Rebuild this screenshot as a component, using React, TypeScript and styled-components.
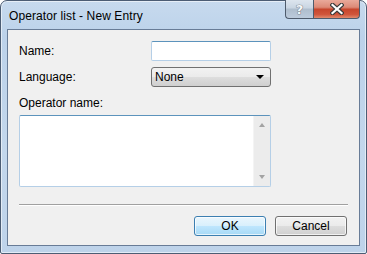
import styled, { createGlobalStyle } from 'styled-components';

const GlobalStyle = createGlobalStyle`
  html, body {
    margin: 0;
    padding: 0;
    background: #ffffff;
  }
  body {
    font-family: 'Liberation Sans', Arial, sans-serif;
    font-size: 12px;
    color: #000;
  }
`;

const App = () => {
  return (
    <>
      <GlobalStyle />
      <Window>
        <TitleBar>
          <Title>Operator list - New Entry</Title>
          <CaptionButtons>
            <HelpButton>?</HelpButton>
            <CloseButton>
              <svg width='14' height='12' viewBox='0 0 14 12'>
                <path
                  d='M2.5 2 L11.5 10 M11.5 2 L2.5 10'
                  stroke='#3a3a3a'
                  strokeWidth='4.4'
                  strokeLinecap='square'
                  fill='none'
                />
                <path
                  d='M2.5 2 L11.5 10 M11.5 2 L2.5 10'
                  stroke='#ffffff'
                  strokeWidth='2.2'
                  strokeLinecap='square'
                  fill='none'
                />
              </svg>
            </CloseButton>
          </CaptionButtons>
        </TitleBar>
        <Client>
          <Form>
            <FieldRow>
              <Label>Name:</Label>
              <TextInput type='text' />
            </FieldRow>
            <FieldRow>
              <Label>Language:</Label>
              <Combo>
                <span>None</span>
                <Arrow />
              </Combo>
            </FieldRow>
            <Label>Operator name:</Label>
            <MemoBox>
              <Memo />
              <ScrollBar>
                <ScrollArrow $up />
                <ScrollArrow />
              </ScrollBar>
            </MemoBox>
          </Form>
          <Separator />
          <ButtonRow>
            <Button $primary>OK</Button>
            <Button>Cancel</Button>
          </ButtonRow>
        </Client>
      </Window>
    </>
  );
};

const Window = styled.div`
  box-sizing: border-box;
  width: 367px;
  height: 254px;
  border: 1px solid #4c5d74;
  border-radius: 7px 7px 2px 2px;
  background: linear-gradient(180deg, #c7daee 0%, #bcd2ea 14%, #c3d7ec 60%, #bed3ea 100%);
  display: flex;
  flex-direction: column;
  padding: 0 6px 7px 6px;
  box-shadow: inset 0 0 0 1px rgba(255, 255, 255, 0.55);
`;

const TitleBar = styled.div`
  height: 28px;
  display: flex;
  justify-content: space-between;
  align-items: flex-start;
`;

const Title = styled.div`
  padding-top: 8px;
  padding-left: 2px;
  font-size: 12px;
  color: #000;
  letter-spacing: 0.1px;
`;

const CaptionButtons = styled.div`
  display: flex;
  margin-top: -1px;
`;

const CaptionButton = styled.div`
  box-sizing: border-box;
  height: 19px;
  display: flex;
  align-items: center;
  justify-content: center;
  border: 1px solid #4e5b6c;
  border-top: none;
`;

const HelpButton = styled(CaptionButton)`
  width: 28px;
  border-right: none;
  border-radius: 0 0 0 4px;
  background: linear-gradient(180deg, #dde5ee 0%, #c9d5e2 45%, #aebdcd 50%, #bccbdc 100%);
  font-family: 'DejaVu Sans', sans-serif;
  font-weight: bold;
  font-size: 13px;
  line-height: 1;
  color: #f6f8fa;
  -webkit-text-stroke: 0.4px #5a616c;
  paint-order: stroke fill;
  text-shadow: 0 0 1px #5a616c;
`;

const CloseButton = styled(CaptionButton)`
  width: 47px;
  border-radius: 0 0 4px 0;
  background: linear-gradient(180deg, #e9a99a 0%, #dc8a77 40%, #c7462d 52%, #d0553b 80%, #e08a6e 100%);
`;

const Client = styled.div`
  flex: 1;
  display: flex;
  flex-direction: column;
  background: #f0f0f0;
  border: 1px solid #687c97;
  padding: 11px 11px 9px 11px;
`;

const Form = styled.div`
  display: flex;
  flex-direction: column;
`;

const FieldRow = styled.div`
  display: flex;
  align-items: center;
  margin-bottom: 6px;
`;

const Label = styled.div`
  width: 132px;
  line-height: 20px;
`;

const TextInput = styled.input`
  box-sizing: border-box;
  width: 120px;
  height: 20px;
  margin: 0;
  border: 1px solid #b5cfe7;
  border-top-color: #5c93bc;
  border-radius: 2px;
  background: #fff;
  outline: none;
`;

const Combo = styled.div`
  box-sizing: border-box;
  width: 120px;
  height: 20px;
  display: flex;
  align-items: center;
  justify-content: space-between;
  padding: 0 6px 0 3px;
  border: 1px solid #707070;
  border-radius: 3px;
  background: linear-gradient(180deg, #f2f2f2 0%, #ebebeb 48%, #dddddd 52%, #cfcfcf 100%);
  font-size: 12px;
`;

const Arrow = styled.span`
  width: 0;
  height: 0;
  border-left: 4px solid transparent;
  border-right: 4px solid transparent;
  border-top: 4px solid #000;
`;

const MemoBox = styled.div`
  box-sizing: border-box;
  margin-top: 2px;
  width: 252px;
  height: 72px;
  display: flex;
  border: 1px solid #b5cfe7;
  border-top-color: #5c93bc;
  border-radius: 2px;
  background: #fff;
`;

const Memo = styled.textarea`
  flex: 1;
  border: none;
  outline: none;
  resize: none;
  margin: 0;
  padding: 2px;
  background: transparent;
`;

const ScrollBar = styled.div`
  width: 16px;
  display: flex;
  flex-direction: column;
  justify-content: space-between;
  align-items: center;
  background: #ececec;
  border-left: 1px solid #f4f4f4;
  padding: 7px 0 7px 0;
`;

const ScrollArrow = styled.span<{ $up?: boolean }>`
  width: 0;
  height: 0;
  border-left: 3.5px solid transparent;
  border-right: 3.5px solid transparent;
  ${p => (p.$up ? 'border-bottom: 4px solid #a3a3a3;' : 'border-top: 4px solid #a3a3a3;')}
`;

const Separator = styled.div`
  margin-top: 17px;
  height: 1px;
  background: #a0a0a0;
  border-bottom: 1px solid #ffffff;
`;

const ButtonRow = styled.div`
  display: flex;
  justify-content: flex-end;
  gap: 9px;
  margin-top: 10px;
  padding-right: 1px;
`;

const Button = styled.button<{ $primary?: boolean }>`
  box-sizing: border-box;
  width: 72px;
  height: 20px;
  margin: 0;
  padding: 0;
  font-family: 'Liberation Sans', Arial, sans-serif;
  font-size: 12px;
  color: #000;
  border-radius: 3px;
  border: 1px solid ${p => (p.$primary ? '#3c7fb1' : '#707070')};
  background: ${p =>
    p.$primary
      ? 'linear-gradient(180deg, #eaf6fd 0%, #d9f0fc 48%, #bee6fd 52%, #a7d9f5 100%)'
      : 'linear-gradient(180deg, #f2f2f2 0%, #ebebeb 48%, #dddddd 52%, #cfcfcf 100%)'};
  box-shadow: inset 0 0 0 1px rgba(255, 255, 255, 0.7);
`;

export default App;
